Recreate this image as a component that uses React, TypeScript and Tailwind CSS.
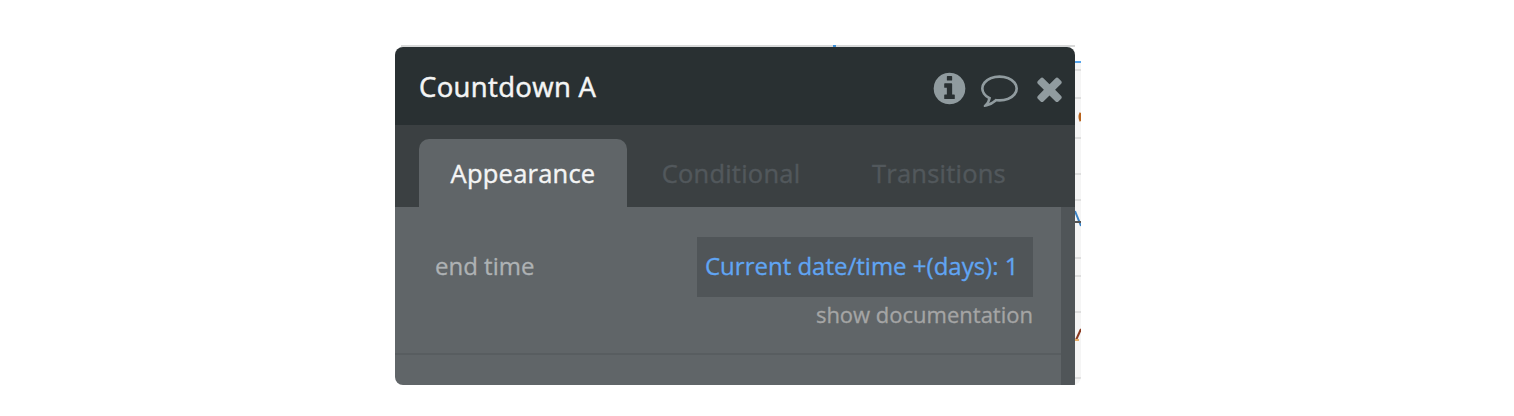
import React from "react";

type IconProps = { path: string; label: string };

const INFO =
  "M1152 1376v-160q0-14-9-23t-23-9h-96v-512q0-14-9-23t-23-9h-320q-14 0-23 9t-9 23v160q0 14 9 23t23 9h96v320h-96q-14 0-23 9t-9 23v160q0 14 9 23t23 9h448q14 0 23-9t9-23zm-128-896v-160q0-14-9-23t-23-9h-192q-14 0-23 9t-9 23v160q0 14 9 23t23 9h192q14 0 23-9t9-23zm640 416q0 209-103 385.5t-279.5 279.5-385.5 103-385.5-103-279.5-279.5-103-385.5 103-385.5 279.5-279.5 385.5-103 385.5 103 279.5 279.5 103 385.5z";
const COMMENT =
  "M896 384q-204 0-381.5 69.5t-282 187.5-104.5 255q0 112 71.5 213.5t201.5 175.5l87 50-27 96q-24 91-70 172 152-63 275-171l43-38 57 6q69 8 130 8 204 0 381.5-69.5t282-187.5 104.5-255-104.5-255-282-187.5-381.5-69.5zm896 512q0 174-120 321.5t-326 233-450 85.5q-70 0-145-8-198 175-460 242-49 14-114 22h-5q-15 0-27-10.5t-16-27.5v-1q-3-4-.5-12t2-10 4.5-9.5l6-9 7-8.5 8-9q7-8 31-34.5t34.5-38 31-39.5 32.5-51 27-59 26-76q-157-89-247.5-220t-90.5-281q0-174 120-321.5t326-233 450-85.5 450 85.5 326 233 120 321.5z";
const TIMES =
  "M1490 1322q0 40-28 68l-136 136q-28 28-68 28t-68-28l-294-294-294 294q-28 28-68 28t-68-28l-136-136q-28-28-28-68t28-68l294-294-294-294q-28-28-28-68t28-68l136-136q28-28 68-28t68 28l294 294 294-294q28-28 68-28t68 28l136 136q28 28 28 68t-28 68l-294 294 294 294q28 28 28 68z";

const Icon: React.FC<IconProps> = ({ path, label }) => (
  <button aria-label={label} className="block text-[#909b9f]">
    <svg viewBox="0 0 1792 1792" className="block size-[37px]" fill="currentColor">
      <path d={path} />
    </svg>
  </button>
);

const Header: React.FC = () => (
  <header className="flex h-[78px] items-center justify-between bg-[#293032] pl-6 pr-[7px] pt-px">
    <h1 className="text-[27.5px] leading-9 tracking-[0.35px] text-[#f4f5f5] [-webkit-text-stroke:0.5px]">
      Countdown A
    </h1>
    <div className="flex items-center gap-[13px] pt-[3px]">
      <Icon path={INFO} label="Info" />
      <Icon path={COMMENT} label="Comments" />
      <Icon path={TIMES} label="Close" />
    </div>
  </header>
);

const Tabs: React.FC = () => (
  <nav className="flex h-[82px] items-end bg-[#3b4042] pl-6 text-[25.5px] tracking-[0.22px] text-[#52585c] [-webkit-text-stroke:0.4px]">
    <button className="h-[68px] w-52 rounded-t-[10px] bg-[#606568] text-[#f4f5f5]">
      Appearance
    </button>
    <button className="h-[68px] w-52">Conditional</button>
    <button className="h-[68px] w-52">Transitions</button>
  </nav>
);

const Properties: React.FC = () => (
  <div className="flex h-[178px] bg-[#606568] [-webkit-text-stroke:0.3px]">
    <div className="flex-1">
      <div className="flex h-[148px] justify-between border-b-2 border-[#585d60] pl-10 pr-7 pt-[30px]">
        <span className="text-[24px] leading-[58px] text-[#aeb2b4]">end time</span>
        <div className="flex flex-col items-end">
          <div className="h-[60px] w-[336px] whitespace-nowrap bg-[#505558] pl-2 text-[24px] leading-[58px] text-[#60a5f4]">
            Current date/time +(days): 1
          </div>
          <a className="pt-px text-[22px] leading-8 text-[#a5a5a5]">
            show documentation
          </a>
        </div>
      </div>
    </div>
    <div className="w-3.5 bg-[#505558]" />
  </div>
);

// Sliver of the editor canvas that shows past the right edge of the panel
const Canvas: React.FC = () => (
  <div className="relative flex w-1.5 flex-col overflow-hidden bg-[#f5f5f5]">
    <div className="h-3.5 bg-white" />
    <div className="h-0.5 bg-[#57a5ec]" />
    <div className="h-2 border-b-2 border-[#dedede]" />
    <div className="h-7 border-b-2 border-[#dedede]" />
    <div className="h-10 border-b-2 border-[#dedede]" />
    <div className="h-9 border-b-2 border-[#dedede]" />
    <div className="h-[26px] border-b-2 border-[#dedede]" />
    <div className="h-[58px] border-b-2 border-[#dedede]" />
    <div className="h-[18px] border-b-2 border-[#dedede]" />
    <div className="h-9 border-b-2 border-[#dedede]" />
    <div className="h-[66px] border-b-2 border-[#dedede]" />
    <svg
      viewBox="0 0 6 338"
      className="absolute left-0 top-0 h-[338px] w-1.5"
      fill="none"
      strokeWidth="2"
    >
      <path d="M6 66Q4 70 6 74" stroke="#b8631c" strokeWidth="3" />
      <path d="M0 164L6 179" stroke="#3b82c4" />
      <path d="M0 175H6" stroke="#555555" />
      <path d="M1 293L6 282" stroke="#8a3b22" />
      <path d="M0 293H4" stroke="#e8b06a" />
    </svg>
  </div>
);

const App: React.FC = () => (
  <div className="h-[416px] w-[1514px] bg-white pl-[395px] pt-[45px] font-['Open_Sans',sans-serif]">
    <div className="w-[686px] overflow-hidden rounded-b-lg">
      <div className="mx-1.5 flex h-0.5 bg-[#d8d9d9] pl-[432px]">
        <div className="w-[3px] bg-[#3d8fd6]" />
      </div>
      <div className="flex h-[338px]">
        <div className="w-[680px] overflow-hidden rounded-t-lg">
          <Header />
          <Tabs />
          <Properties />
        </div>
        <Canvas />
      </div>
    </div>
  </div>
);

export default App;
